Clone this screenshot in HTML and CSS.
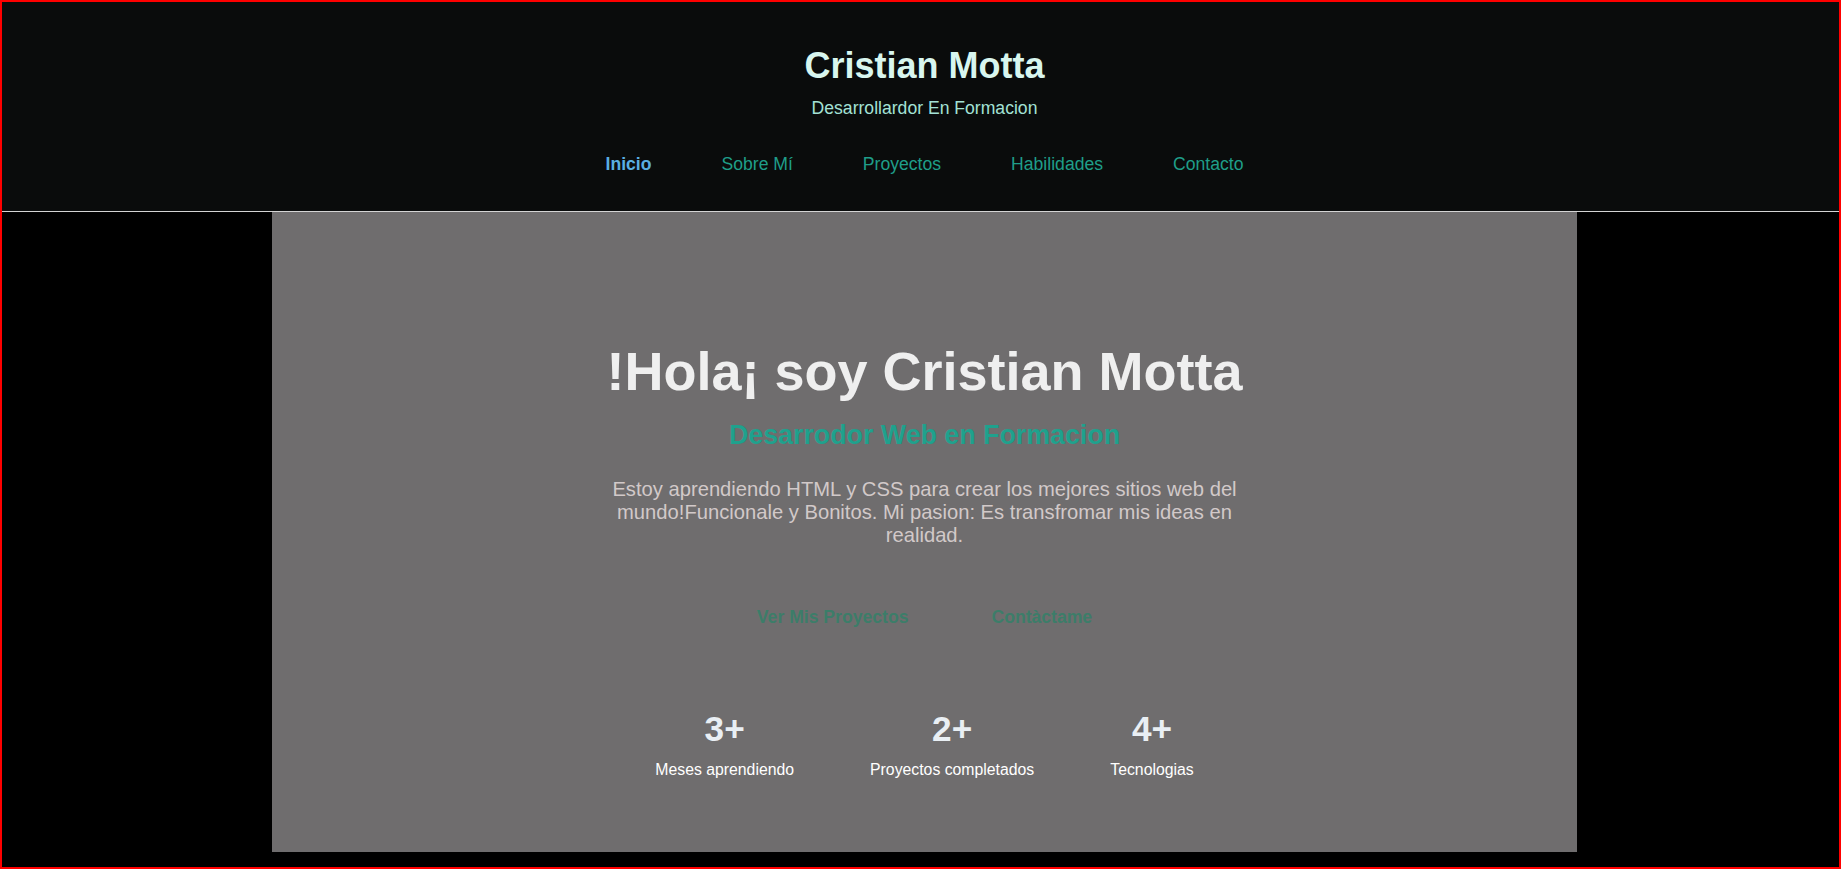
FILE: index.html
```html
<!DOCTYPE html>
<html lang="es">
<head>
<meta charset="utf-8">
<title>Cristian Motta</title>
<link rel="stylesheet" href="styles.css">
</head>
<body>
<div class="frame">
  <header class="site-header">
    <h1 class="brand">Cristian Motta</h1>
    <p class="brand-sub">Desarrollardor En Formacion</p>
    <nav class="nav">
      <a class="nav-link active" href="#">Inicio</a>
      <a class="nav-link" href="#">Sobre Mí</a>
      <a class="nav-link" href="#">Proyectos</a>
      <a class="nav-link" href="#">Habilidades</a>
      <a class="nav-link" href="#">Contacto</a>
    </nav>
  </header>
  <main class="main">
    <section class="hero">
      <h2 class="hero-title">!Hola¡ soy Cristian Motta</h2>
      <h3 class="hero-sub">Desarrodor Web en Formacion</h3>
      <p class="hero-text">Estoy aprendiendo HTML y CSS para crear los mejores sitios web del mundo!Funcionale y Bonitos. Mi pasion: Es transfromar mis ideas en realidad.</p>
      <div class="buttons">
        <a class="btn" href="#">Ver Mis Proyectos</a>
        <a class="btn" href="#">Contàctame</a>
      </div>
      <div class="stats">
        <div class="stat">
          <div class="stat-num">3+</div>
          <div class="stat-label">Meses aprendiendo</div>
        </div>
        <div class="stat">
          <div class="stat-num">2+</div>
          <div class="stat-label">Proyectos completados</div>
        </div>
        <div class="stat">
          <div class="stat-num">4+</div>
          <div class="stat-label">Tecnologias</div>
        </div>
      </div>
    </section>
  </main>
</div>
</body>
</html>
```
FILE: styles.css
```css
* { box-sizing: border-box; }
html, body {
  margin: 0;
  padding: 0;
  background: #000;
  font-family: "Liberation Sans", Arial, sans-serif;
}
.frame {
  min-height: 100vh;
  border: 2px solid #ff0000;
  display: flex;
  flex-direction: column;
}
.site-header {
  background: #0a0c0c;
  border-bottom: 1px solid #d4d4d4;
  padding: 43px 0 36px 8px;
  text-align: center;
}
.brand {
  margin: 0;
  font-size: 36px;
  line-height: 42px;
  font-weight: 700;
  color: #d8f6ef;
}
.brand-sub {
  margin: 9.5px 0 0;
  font-size: 17.6px;
  line-height: 22px;
  color: #a3e2d6;
}
.nav {
  margin-top: 34.5px;
  display: flex;
  justify-content: center;
  gap: 70px;
}
.nav-link {
  font-size: 17.6px;
  line-height: 22px;
  color: #1f9e89;
  text-decoration: none;
}
.nav-link.active {
  color: #5aaee2;
  font-weight: 700;
}
.main {
  padding-left: 8px;
  display: flex;
  justify-content: center;
}
.hero {
  width: 1305px;
  background: #6f6d6e;
  padding: 128px 0 72.5px;
  display: flex;
  flex-direction: column;
  align-items: center;
  text-align: center;
}
.hero-title {
  margin: 0;
  font-size: 54px;
  line-height: 62px;
  font-weight: 700;
  color: #efefef;
}
.hero-sub {
  margin: 16.7px 0 0;
  font-size: 26.8px;
  line-height: 32px;
  font-weight: 700;
  color: #1fa18d;
}
.hero-text {
  margin: 27.8px 0 0;
  max-width: 650px;
  font-size: 20.2px;
  line-height: 22.6px;
  color: #d2c9c9;
}
.buttons {
  margin-top: 48px;
  display: flex;
  gap: 23px;
}
.btn {
  padding: 12px 30px;
  font-size: 17.6px;
  line-height: 22px;
  font-weight: 700;
  color: #3c7d69;
  text-decoration: none;
}
.stats {
  margin-top: 67.6px;
  display: flex;
  gap: 76px;
}
.stat {
  display: flex;
  flex-direction: column;
  align-items: center;
}
.stat-num {
  font-size: 35.2px;
  line-height: 42px;
  font-weight: 700;
  color: #e9eff4;
}
.stat-label {
  margin-top: 9.7px;
  font-size: 15.8px;
  line-height: 20px;
  color: #ffffff;
}
```
